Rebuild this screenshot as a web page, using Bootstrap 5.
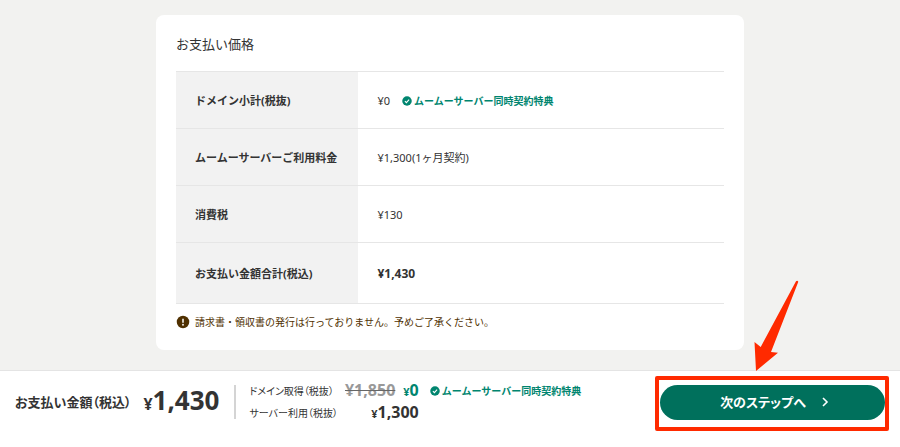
<!DOCTYPE html>
<html lang="ja">
<head>
<meta charset="utf-8">
<meta name="viewport" content="width=device-width, initial-scale=1">
<title>お支払い価格</title>
<link href="https://cdn.jsdelivr.net/npm/bootstrap@5.3.0/dist/css/bootstrap.min.css" rel="stylesheet">
<style>
  body { font-family: "Noto Sans", "Noto Sans CJK JP", sans-serif; font-size: 11px; line-height: 16px; color: #333; background: #f2f2f0; }
  .price-panel { max-width: 588px; border-radius: 8px; padding: 19px 20px 20px; margin-top: 15px; margin-bottom: 97px; }
  .panel-title { font-size: 13px; line-height: 20px; font-weight: 400; margin-bottom: 17px; }
  .price-table { table-layout: fixed; border-color: #e6e6e6; }
  .price-table tr { border-top: 1px solid #e6e6e6; height: 57px; }
  .price-table tr:last-child { border-bottom: 1px solid #e6e6e6; height: 61px; }
  .price-table th, .price-table td { padding: 1px 19px 0; vertical-align: middle; }
  .price-table th { width: 33.3%; background: #f2f2f2; }
  .sum-value { font-size: 12px; }
  .perk { color: #00856f; font-size: 10px; font-weight: 700; gap: 2px; }
  .notice { color: #4f3000; font-size: 10px; gap: 5px; margin-top: 10px; }
  .pay-bar { border-top: 1px solid #e4e4e4; padding: 9px 15px 23px; }
  .tight { font-feature-settings: "palt"; }
  .pay-label { font-size: 13px; font-weight: 700; }
  .pay-total { font-size: 26px; line-height: 36px; font-weight: 700; margin-left: 12px; }
  .pay-total small { font-size: 16px; font-weight: 700; }
  .pay-rule { width: 2px; height: 34px; background: #d4d4d4; margin: 0 13px 0 15px; }
  .breakdown { display: grid; grid-template-columns: auto auto auto; column-gap: 7px; align-items: center; grid-auto-rows: 22px; font-size: 10px; }
  .amount { font-size: 16px; line-height: 22px; font-weight: 700; }
  .amount small { font-size: 11px; font-weight: 700; }
  .amount del { color: #999; text-decoration: line-through; text-decoration-color: #666; }
  .amount .free { color: #00856f; }
  .next-wrap { width: 225px; }
  .btn.next-step { --bs-btn-color: #fff; --bs-btn-bg: #00705c; --bs-btn-hover-color: #fff; --bs-btn-hover-bg: #005d4d; --bs-btn-border-width: 0; font-size: 13px; line-height: 19px; font-weight: 700; padding: 8px 0 8px 4px; gap: 16px; }
  .mark-box { position: absolute; inset: -9px -4px -11px -5px; border: 4px solid #ff2a00; border-radius: 2px; pointer-events: none; }
  .mark-arrow { position: absolute; left: 93px; top: -106px; pointer-events: none; }
</style>
<script src="https://cdn.jsdelivr.net/npm/bootstrap@5.3.0/dist/js/bootstrap.bundle.min.js"></script>
</head>
<body>
<main class="container-fluid overflow-hidden">
  <section class="price-panel bg-white mx-auto">
    <h1 class="panel-title">お支払い価格</h1>
    <table class="price-table w-100">
      <tbody>
        <tr><th scope="row">ドメイン小計(税抜)</th>
          <td><div class="d-flex align-items-center"><span class="me-2 pe-1">¥0</span>
            <span class="perk d-inline-flex align-items-center"><svg width="10" height="10" viewBox="0 0 20 20" aria-hidden="true"><circle cx="10" cy="10" r="9.5" fill="#00856f"/><path d="M5.8 10.2l3 3 5.4-5.8" fill="none" stroke="#fff" stroke-width="2.2"/></svg>ムームーサーバー同時契約特典</span></div></td></tr>
        <tr><th scope="row">ムームーサーバーご利用料金</th><td>¥1,300(1ヶ月契約)</td></tr>
        <tr><th scope="row">消費税</th><td>¥130</td></tr>
        <tr><th scope="row">お支払い金額合計(税込)</th><td class="sum-value fw-bold">¥1,430</td></tr>
      </tbody>
    </table>
    <p class="notice d-flex align-items-center mb-0"><svg width="14" height="14" viewBox="0 0 28 28" aria-hidden="true"><circle cx="14" cy="14" r="12.5" fill="#4f3000"/><path d="M14 7.5v8" stroke="#fff" stroke-width="3"/><circle cx="14" cy="19.5" r="1.8" fill="#fff"/></svg>請求書・領収書の発行は行っておりません。予めご了承ください。</p>
  </section>
</main>

<footer class="pay-bar fixed-bottom bg-white d-flex align-items-center">
  <span class="pay-label tight">お支払い金額（税込）</span>
  <span class="pay-total"><small>¥</small>1,430</span>
  <span class="pay-rule"></span>
  <div class="breakdown">
    <span class="tight">ドメイン取得（税抜）</span>
    <span class="amount d-flex justify-content-between gap-2"><del>¥1,850</del><span class="free"><small>¥</small>0</span></span>
    <span class="perk d-inline-flex align-items-center ms-1"><svg width="10" height="10" viewBox="0 0 20 20" aria-hidden="true"><circle cx="10" cy="10" r="9.5" fill="#00856f"/><path d="M5.8 10.2l3 3 5.4-5.8" fill="none" stroke="#fff" stroke-width="2.2"/></svg>ムームーサーバー同時契約特典</span>
    <span class="tight">サーバー利用（税抜）</span>
    <span class="amount text-end"><small>¥</small>1,300</span>
  </div>
  <div class="next-wrap position-relative ms-auto">
    <button type="button" class="btn next-step tight rounded-pill w-100 d-flex align-items-center justify-content-center">次のステップへ
      <svg width="7" height="10" viewBox="0 0 7 10" aria-hidden="true"><path d="M1 1l4 4-4 4" fill="none" stroke="#fff" stroke-width="1.6"/></svg></button>
    <span class="mark-box"></span>
    <svg class="mark-arrow" width="48" height="94" viewBox="0 0 48 94" aria-hidden="true"><path d="M43 2.3Q44.3.8 45.3 2.7L18 73 25 73.7 3 92 1.5 63 7.7 68z" fill="#ff2a00"/></svg>
  </div>
</footer>
</body>
</html>
